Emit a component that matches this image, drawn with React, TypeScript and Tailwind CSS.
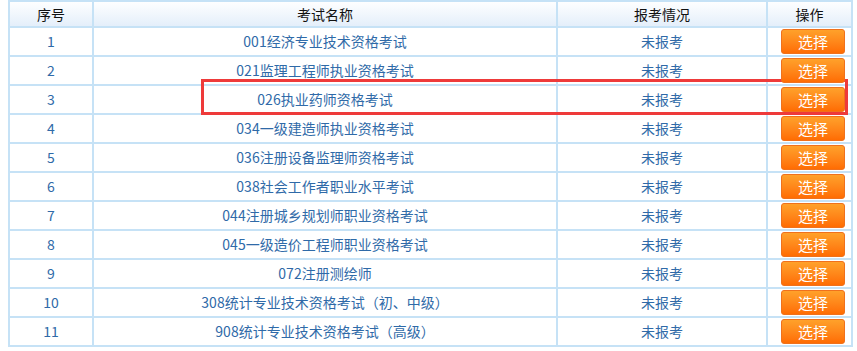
const exams = [
  '001经济专业技术资格考试',
  '021监理工程师执业资格考试',
  '026执业药师资格考试',
  '034一级建造师执业资格考试',
  '036注册设备监理师资格考试',
  '038社会工作者职业水平考试',
  '044注册城乡规划师职业资格考试',
  '045一级造价工程师职业资格考试',
  '072注册测绘师',
  '308统计专业技术资格考试（初、中级）',
  '908统计专业技术资格考试（高级）',
];

export default function App() {
  return (
    <div
      className="w-[857px] h-[351px] bg-white pl-[8px] pr-[6px]"
      style={{ fontFamily: '"Microsoft YaHei", "Noto Sans CJK SC", sans-serif' }}
    >
      <div className="relative">
        <table className="w-[843px] border-collapse table-fixed text-[14px]">
          <colgroup>
            <col className="w-[84px]" />
            <col className="w-[464px]" />
            <col className="w-[210px]" />
            <col className="w-[85px]" />
          </colgroup>
          <thead>
            <tr className="h-[26px] bg-gradient-to-b from-white to-[#e3eefa] text-[#111]">
              <th className="border-2 border-[#c6e2f6] font-normal">序号</th>
              <th className="border-2 border-[#c6e2f6] font-normal">考试名称</th>
              <th className="border-2 border-[#c6e2f6] font-normal">报考情况</th>
              <th className="border-2 border-[#c6e2f6] font-normal">操作</th>
            </tr>
          </thead>
          <tbody className="text-[#2f6aa8]">
            {exams.map((name, i) => (
              <tr key={name} className="h-[29px]">
                <td className="border-2 border-[#c6e2f6] text-center">{i + 1}</td>
                <td className="border-2 border-[#c6e2f6] text-center">{name}</td>
                <td className="border-2 border-[#c6e2f6] text-center">未报考</td>
                <td className="border-2 border-[#c6e2f6] pl-[13px]">
                  <button className="relative z-10 block w-[64px] h-[25px] rounded-[3px] border border-[#f0711c] bg-gradient-to-b from-[#ffa12a] to-[#ff6c02] text-white text-[15px] leading-[23px]">
                    选择
                  </button>
                </td>
              </tr>
            ))}
          </tbody>
        </table>
        <div className="absolute left-[193px] top-[79px] w-[647px] h-[36px] border-[3px] border-[#ee3a3a]" />
      </div>
    </div>
  );
}
